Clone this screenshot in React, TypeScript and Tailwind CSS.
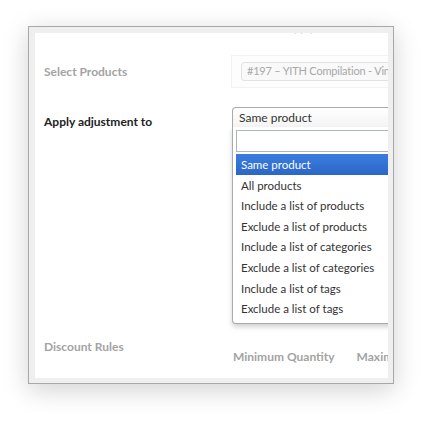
import React from 'react'

const options = [
  'Same product',
  'All products',
  'Include a list of products',
  'Exclude a list of products',
  'Include a list of categories',
  'Exclude a list of categories',
  'Include a list of tags',
  'Exclude a list of tags',
]

export default function App() {
  return (
    <main className="w-[422px] h-[428px] bg-white pt-[26px] pl-[28px] font-['Lato',sans-serif]">
      <div className="w-[366px] h-[358px] border border-[#a8a8a8] bg-[#efefef] p-[6px] shadow-[0_6px_24px_rgba(0,0,0,0.18)]">
        <div className="w-[353px] h-[345px] bg-white overflow-hidden pl-[9px]">
          {/* clipped row above */}
          <div className="h-[3px] overflow-hidden pl-[190px]">
            <div className="-mt-[13px] text-[11px] text-[#d4d4d4] whitespace-nowrap">Amount to apply</div>
          </div>

          <div className="flex items-center h-[33px] mt-[19px]">
            <div className="w-[187px] shrink-0 text-[12px] font-bold text-[#a3a3a3]">Select Products</div>
            <div className="w-[200px] shrink-0 h-[33px] border border-[#f2f2f2] bg-[#fdfdfd] flex items-center pl-[9px]">
              <div className="w-[200px] shrink-0 h-[19px] border border-[#e2e2e2] rounded-[3px] bg-[#f9f9f9] flex items-center pl-[5px] text-[11px] tracking-[-0.2px] text-[#a8a8a8] whitespace-nowrap">
                #197 – YITH Compilation - Vintage
              </div>
            </div>
          </div>

          <div className="flex items-start mt-[19px]">
            <div className="w-[188px] shrink-0 pt-[6px] text-[12px] font-bold text-[#222]">Apply adjustment to</div>
            <div className="relative w-[200px] shrink-0">
              <div className="h-[20px] border border-[#aaa] border-b-0 rounded-t-[4px] bg-gradient-to-b from-white to-[#f4f4f4] pl-[6px] flex items-center text-[12px] text-[#333]">
                Same product
              </div>
              <div className="absolute left-0 top-full w-[200px] border border-[#aaa] border-t-0 rounded-b-[4px] bg-white shadow-[0_3px_5px_rgba(0,0,0,0.18)] px-[3px] pt-[3px] pb-[4px]">
                <div className="h-[22px] border border-[#aab6c4] bg-white" />
                <ul className="mt-[2px]">
                  {options.map((o, i) => (
                    <li
                      key={o}
                      className={
                        i === 0
                          ? 'h-[21px] flex items-center pl-[5px] text-[11.5px] text-white bg-gradient-to-b from-[#3b7ee0] to-[#2a66c6]'
                          : 'h-[20.6px] flex items-center pl-[5px] text-[11.5px] text-[#333]'
                      }
                    >
                      {o}
                    </li>
                  ))}
                </ul>
              </div>
            </div>
          </div>

          <div className="flex items-start mt-[207px]">
            <div className="w-[189px] shrink-0 text-[12px] font-bold text-[#a3a3a3]">Discount Rules</div>
            <div className="flex gap-[22px] pt-[10px] text-[12px] font-bold text-[#a3a3a3] whitespace-nowrap">
              <span>Minimum Quantity</span>
              <span>Maximum Quantity</span>
            </div>
          </div>
        </div>
      </div>
    </main>
  )
}
